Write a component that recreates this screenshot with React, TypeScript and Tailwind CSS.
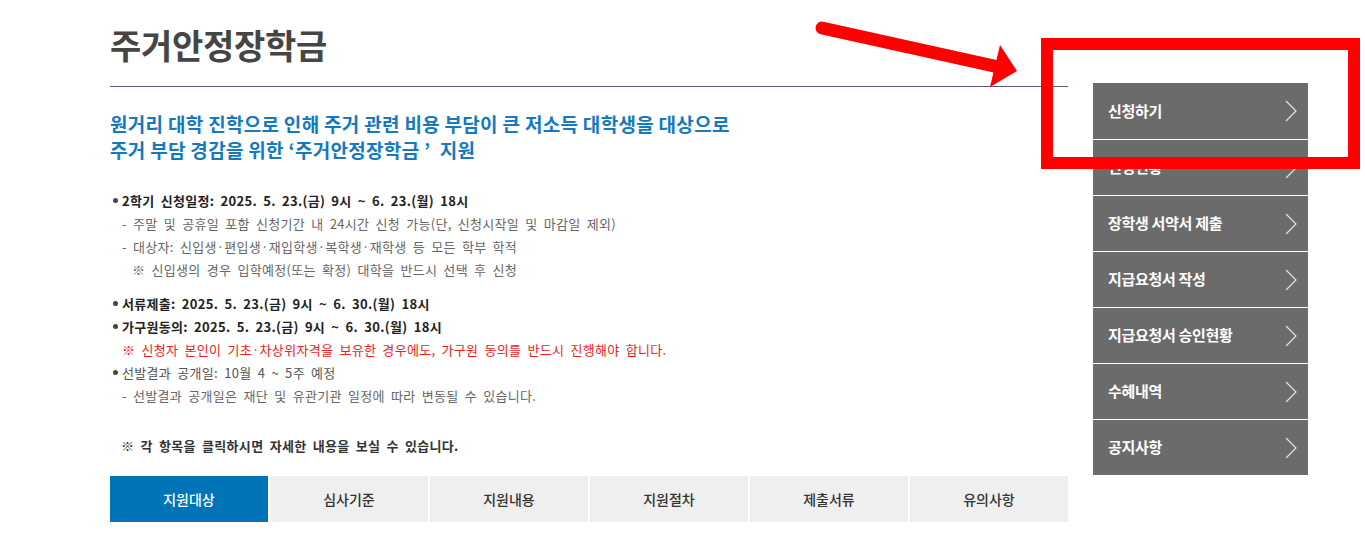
import React from 'react';

const menus = ['신청하기', '신청현황', '장학생 서약서 제출', '지급요청서 작성', '지급요청서 승인현황', '수혜내역', '공지사항'];
const tabs = ['지원대상', '심사기준', '지원내용', '지원절차', '제출서류', '유의사항'];

const font = { fontFamily: '"Noto Sans CJK KR", "Noto Sans", sans-serif' };

function Chevron() {
  return (
    <svg width="12" height="22" viewBox="0 0 12 22" fill="none">
      <polyline points="1,1 11,11 1,21" stroke="#e4e4e4" strokeWidth="1.2" />
    </svg>
  );
}

function Bullet({ children, bold }: { children: React.ReactNode; bold?: boolean }) {
  return (
    <div className={`flex items-center ${bold ? 'font-bold text-[#222]' : 'text-[#555]'}`}>
      <span className="w-[12px] shrink-0 pl-[3px] flex items-center">
        <span className="block w-[5px] h-[5px] rounded-full bg-[#444]" />
      </span>
      <span>{children}</span>
    </div>
  );
}

export default function App() {
  return (
    <div className="relative w-[1365px] h-[546px] overflow-hidden bg-white" style={font}>
      <div className="flex items-start">
        {/* main */}
        <div className="ml-[110px] w-[958px]">
          <div className="h-[87px] pt-[25px] border-b border-[#5a5570]">
            <h1 className="text-[34px] leading-[40px] font-bold text-[#454545] tracking-[-0.3px]">주거안정장학금</h1>
          </div>

          <div className="mt-[24px] text-[19px] leading-[26px] font-bold text-[#1479bf] tracking-[0.3px]">
            <p>원거리 대학 진학으로 인해 주거 관련 비용 부담이 큰 저소득 대학생을 대상으로</p>
            <p>주거 부담 경감을 위한 ‘주거안정장학금 ’&nbsp; 지원</p>
          </div>

          <div className="mt-[26px] text-[13px] leading-[23px] tracking-[0.3px] [word-spacing:3px]">
            <Bullet bold>2학기 신청일정: 2025. 5. 23.(금) 9시 ~ 6. 23.(월) 18시</Bullet>
            <p className="pl-[12px] text-[#666]">- 주말 및 공휴일 포함 신청기간 내 24시간 신청 가능(단, 신청시작일 및 마감일 제외)</p>
            <p className="pl-[12px] text-[#666]">- 대상자: 신입생·편입생·재입학생·복학생·재학생 등 모든 학부 학적</p>
            <p className="pl-[22px] text-[#666]">※ 신입생의 경우 입학예정(또는 확정) 대학을 반드시 선택 후 신청</p>

            <div className="mt-[11px]">
              <Bullet bold>서류제출: 2025. 5. 23.(금) 9시 ~ 6. 30.(월) 18시</Bullet>
              <Bullet bold>가구원동의: 2025. 5. 23.(금) 9시 ~ 6. 30.(월) 18시</Bullet>
              <p className="pl-[12px] text-[#f01c1c]">※ 신청자 본인이 기초·차상위자격을 보유한 경우에도, 가구원 동의를 반드시 진행해야 합니다.</p>
              <Bullet>선발결과 공개일: 10월 4 ~ 5주 예정</Bullet>
              <p className="pl-[12px] text-[#666]">- 선발결과 공개일은 재단 및 유관기관 일정에 따라 변동될 수 있습니다.</p>
            </div>

            <p className="mt-[27px] pl-[11px] font-bold text-[#333]">※ 각 항목을 클릭하시면 자세한 내용을 보실 수 있습니다.</p>
          </div>

          <div className="mt-[19px] grid grid-cols-6 gap-[2px]">
            {tabs.map((t, i) => (
              <div
                key={t}
                className={`h-[46px] flex items-center justify-center text-[14px] font-medium ${
                  i === 0 ? 'bg-[#0074b7] text-white' : 'bg-[#efefef] text-[#333]'
                }`}
              >
                {t}
              </div>
            ))}
          </div>
        </div>

        {/* side menu */}
        <div className="ml-[25px] mt-[83px] w-[215px] bg-[#6b6b6b]">
          {menus.map((m, i) => (
            <div
              key={m}
              className={`h-[56px] flex items-center justify-between pl-[15px] pr-[11px] text-white text-[15px] font-bold tracking-[-0.3px] ${
                i > 0 ? 'border-t border-white' : ''
              }`}
            >
              <span>{m}</span>
              <Chevron />
            </div>
          ))}
        </div>
      </div>

      {/* annotation: red box */}
      <div className="absolute left-[1041px] top-[38px] w-[319px] h-[131px] border-[12px] border-[#ff0000]" />

      {/* annotation: red arrow */}
      <svg className="absolute left-0 top-0 pointer-events-none" width="1365" height="546">
        <line x1="822" y1="28" x2="994" y2="66" stroke="#ff0000" strokeWidth="13" strokeLinecap="round" />
        <polygon points="1000,45 1017,71 990,87" fill="#ff0000" />
      </svg>
    </div>
  );
}
